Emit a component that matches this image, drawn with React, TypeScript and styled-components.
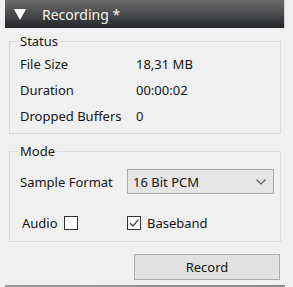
import React from "react";
import styled, { createGlobalStyle } from "styled-components";

const GlobalStyle = createGlobalStyle`
  html, body {
    margin: 0;
    padding: 0;
    background: #f0f0f0;
  }
  body {
    font-family: "Noto Sans", "Liberation Sans", sans-serif;
    font-size: 13px;
    color: #151515;
  }
`;

const Panel = styled.div`
  width: 293px;
  height: 287px;
  overflow: hidden;
  display: flex;
  flex-direction: column;
`;

const Header = styled.div`
  margin: 0 8px 0 5px;
  height: 28px;
  box-sizing: border-box;
  display: flex;
  align-items: center;
  gap: 16px;
  padding-left: 9px;
  background: linear-gradient(#6c6c6c, #4a4b4d 50%, #232428);
  border-right: 1px solid #d2d2d2;
  color: #f4f1ec;
  font-size: 14px;
`;

const Arrow = styled.span`
  width: 0;
  height: 0;
  border-left: 6px solid transparent;
  border-right: 6px solid transparent;
  border-top: 11px solid #ffffff;
`;

const Group = styled.fieldset<{ $top: number; $padRight?: number }>`
  margin: ${(p) => p.$top}px 12px 0 9px;
  padding: 0 ${(p) => p.$padRight ?? 10}px 0 10px;
  border: 1px solid #dadada;
  min-width: 0;
`;

const Legend = styled.legend`
  padding: 0 2px;
  margin-left: -2px;
  line-height: 16px;
`;

const InfoGrid = styled.div`
  display: grid;
  grid-template-columns: 116px 1fr;
  grid-auto-rows: 26px;
  align-items: center;
  padding: 2px 0 4px;
`;

const FormRow = styled.div<{ $mt: number; $h: number; $mb?: number }>`
  display: grid;
  grid-template-columns: 107px 1fr;
  align-items: center;
  height: ${(p) => p.$h}px;
  margin: ${(p) => p.$mt}px 0 ${(p) => p.$mb ?? 0}px;
`;

const Select = styled.div`
  height: 25px;
  box-sizing: border-box;
  display: flex;
  align-items: center;
  justify-content: space-between;
  padding: 0 7px 0 5px;
  background: #e5e5e5;
  border: 1px solid #acacac;
`;

const CheckItem = styled.label<{ $indent?: number }>`
  display: flex;
  align-items: center;
  gap: 6px;
  padding-left: ${(p) => p.$indent ?? 0}px;
`;

const Box = styled.span`
  width: 14px;
  height: 14px;
  box-sizing: border-box;
  border: 1px solid #333;
  background: #fff;
  display: flex;
  align-items: center;
  justify-content: center;
`;

const Footer = styled.div`
  display: flex;
  justify-content: flex-end;
  padding: 12px 13px 0 0;
`;

const Button = styled.button`
  width: 146px;
  height: 26px;
  background: #e1e1e1;
  border: 1px solid #adadad;
  font: inherit;
  color: #151515;
  padding: 0;
`;

const NextHeader = styled.div`
  margin: 5px 8px 0 5px;
  height: 2px;
  background: linear-gradient(90deg, #9a9a9a, #8a8a8a);
`;

export default function App() {
  return (
    <>
      <GlobalStyle />
      <Panel>
        <Header>
          <Arrow />
          <span>Recording *</span>
        </Header>

        <Group $top={5}>
          <Legend>Status</Legend>
          <InfoGrid>
            <span>File Size</span>
            <span>18,31 MB</span>
            <span>Duration</span>
            <span>00:00:02</span>
            <span>Dropped Buffers</span>
            <span>0</span>
          </InfoGrid>
        </Group>

        <Group $top={9} $padRight={6}>
          <Legend>Mode</Legend>
          <FormRow $mt={10} $h={25}>
            <span>Sample Format</span>
            <Select>
              <span>16 Bit PCM</span>
              <svg width="10" height="6" viewBox="0 0 10 6">
                <path d="M0.5 0.5 L5 5 L9.5 0.5" fill="none" stroke="#5a5a5a" strokeWidth="1.1" />
              </svg>
            </Select>
          </FormRow>
          <FormRow $mt={18} $h={22} $mb={7}>
            <CheckItem $indent={2}>
              Audio
              <Box />
            </CheckItem>
            <CheckItem>
              <Box>
                <svg width="12" height="12" viewBox="0 0 12 12">
                  <path d="M2 6 L5 9 L10.5 2.5" fill="none" stroke="#444" strokeWidth="1.2" />
                </svg>
              </Box>
              Baseband
            </CheckItem>
          </FormRow>
        </Group>

        <Footer>
          <Button>Record</Button>
        </Footer>
        <NextHeader />
      </Panel>
    </>
  );
}
